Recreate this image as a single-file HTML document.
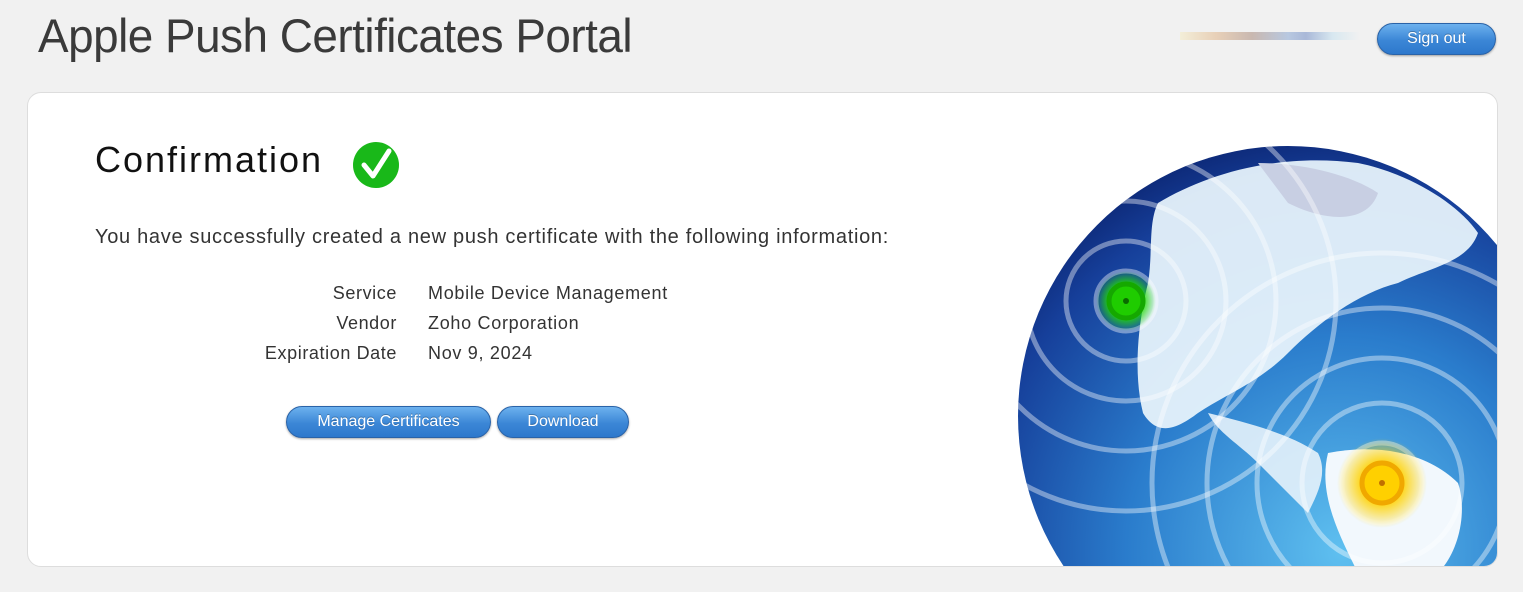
<!DOCTYPE html>
<html><head><meta charset="utf-8"><style>
html,body{margin:0;width:1523px;height:592px;overflow:hidden}
body{background:#f1f1f1;font-family:"Liberation Sans",sans-serif;position:relative}
.title{position:absolute;left:38px;top:8px;font-size:47px;color:#3a3a3a;white-space:nowrap;transform-origin:0 0;transform:scaleX(0.975);letter-spacing:-0.5px}
.btn{position:absolute;height:30px;border-radius:16px;background:linear-gradient(#6cb1ee,#3b86d6 55%,#2d78cc);border:1px solid #2a63a8;color:#fff;font-size:16px;text-align:center;line-height:29px;box-shadow:0 1px 2px rgba(0,0,0,.35);text-shadow:0 -1px 0 rgba(0,0,0,.25)}
.card{position:absolute;left:27px;top:92px;width:1469px;height:473px;background:#fff;border:1px solid #ddd;border-radius:14px;overflow:hidden}
.blur{position:absolute;top:32px;height:8px;}
.lbl{position:absolute;font-size:18px;color:#333;letter-spacing:0.6px;text-align:right;width:300px}
.val{position:absolute;font-size:18px;color:#333;letter-spacing:0.7px}
</style></head><body>
<div class="title">Apple Push Certificates Portal</div>
<div class="blur" style="left:1180px;width:180px;background:linear-gradient(90deg,#f3eed8,#e8d0b8 20%,#c9b8b0 40%,#b8c8e0 60%,#a9b8d8 70%,#d8e8f0 85%,#f1f1f1)"></div>
<div class="btn" style="left:1377px;top:23px;width:117px">Sign out</div>
<div class="card">
<svg width="1469" height="473" style="position:absolute;left:0;top:0">
<defs>
<radialGradient id="g" cx="0.6" cy="0.75" r="0.8"><stop offset="0" stop-color="#5fc0f0"/><stop offset="0.5" stop-color="#2a7ccc"/><stop offset="0.85" stop-color="#163f9a"/><stop offset="1" stop-color="#0b2470"/></radialGradient>
<radialGradient id="y"><stop offset="0.4" stop-color="#ffd200"/><stop offset="1" stop-color="#ffd200" stop-opacity="0"/></radialGradient>
<radialGradient id="gr"><stop offset="0.5" stop-color="#22dd00"/><stop offset="1" stop-color="#22dd00" stop-opacity="0"/></radialGradient>
<clipPath id="c"><circle cx="1260" cy="323" r="270"/></clipPath>
</defs>
<circle cx="1260" cy="323" r="270" fill="url(#g)"/>
<g clip-path="url(#c)">
<path d="M1130 110 C1180 80 1250 60 1330 70 C1380 80 1430 110 1450 140 C1440 170 1400 175 1370 190 C1330 200 1290 230 1260 260 C1230 290 1200 300 1170 320 C1150 335 1130 345 1115 320 C1105 280 1110 230 1120 190 C1125 160 1120 130 1130 110Z" fill="#e6f2fb" opacity="0.95"/>
<path d="M1180 320 C1220 330 1260 340 1290 360 C1300 380 1290 400 1280 420 L1230 370 C1210 350 1190 340 1180 320Z" fill="#e6f2fb" opacity="0.9"/>
<path d="M1300 360 C1350 350 1400 360 1430 390 C1440 420 1430 460 1410 480 L1330 480 C1310 440 1290 400 1300 360Z" fill="#f2f8fd"/>
<path d="M1230 70 C1270 70 1320 80 1350 100 C1340 130 1300 130 1260 110Z" fill="#c8cfe3"/>
<g fill="none" stroke="#fff" stroke-opacity="0.4" stroke-width="5">
<circle cx="1098" cy="208" r="30"/><circle cx="1098" cy="208" r="60"/><circle cx="1098" cy="208" r="100"/><circle cx="1098" cy="208" r="150"/><circle cx="1098" cy="208" r="210"/>
<circle cx="1354" cy="390" r="40"/><circle cx="1354" cy="390" r="80"/><circle cx="1354" cy="390" r="125"/><circle cx="1354" cy="390" r="175"/><circle cx="1354" cy="390" r="230"/>
</g>
</g>
<circle cx="1098" cy="208" r="30" fill="url(#gr)"/>
<circle cx="1098" cy="208" r="17" fill="#1fcc00" stroke="#15a800" stroke-width="5"/>
<circle cx="1098" cy="208" r="3" fill="#0a6a00"/>
<circle cx="1354" cy="390" r="45" fill="url(#y)"/>
<circle cx="1354" cy="390" r="20" fill="#ffd000" stroke="#f0a800" stroke-width="5"/>
<circle cx="1354" cy="390" r="3" fill="#c07000"/>
<circle cx="348" cy="72" r="23" fill="#19b819"/>
<path d="M336 72 L345 83 L361 58" fill="none" stroke="#fff" stroke-width="5" stroke-linecap="round" stroke-linejoin="round"/>
</svg>
<div style="position:absolute;left:67px;top:46px;font-size:36px;color:#111;letter-spacing:2px">Confirmation</div>
<div style="position:absolute;left:67px;top:133px;font-size:20px;color:#333;letter-spacing:0.7px">You have successfully created a new push certificate with the following information:</div>
<div class="lbl" style="top:190px;left:69px">Service</div><div class="val" style="top:190px;left:400px">Mobile Device Management</div>
<div class="lbl" style="top:220px;left:69px">Vendor</div><div class="val" style="top:220px;left:400px">Zoho Corporation</div>
<div class="lbl" style="top:250px;left:69px">Expiration Date</div><div class="val" style="top:250px;left:400px">Nov 9, 2024</div>
</div>
<div class="btn" style="left:286px;top:406px;width:203px">Manage Certificates</div>
<div class="btn" style="left:497px;top:406px;width:130px">Download</div>
</body></html>
